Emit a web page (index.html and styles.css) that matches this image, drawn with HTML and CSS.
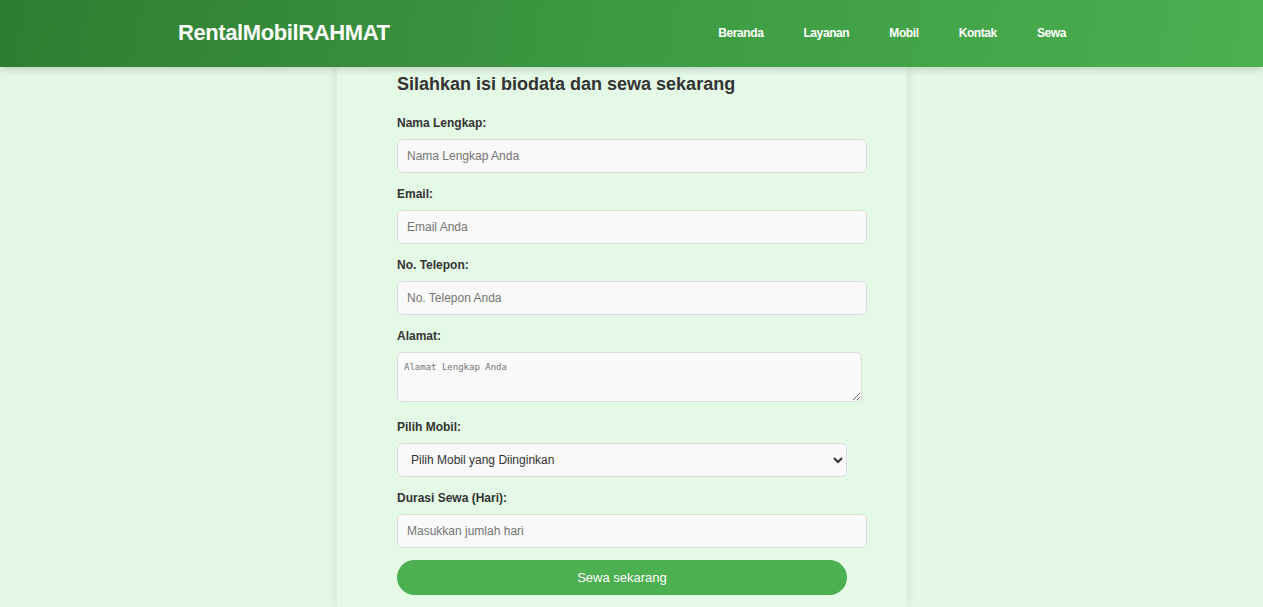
FILE: index.html
```html
<!DOCTYPE html>
<html lang="id">
<head>
<meta charset="utf-8">
<title>RentalMobilRAHMAT - Sewa</title>
<link rel="stylesheet" href="styles.css">
</head>
<body>
<header class="site-header">
  <div class="header-inner">
    <div class="logo">RentalMobilRAHMAT</div>
    <nav class="nav">
      <a href="#" class="nav-link">Beranda</a>
      <a href="#" class="nav-link">Layanan</a>
      <a href="#" class="nav-link">Mobil</a>
      <a href="#" class="nav-link">Kontak</a>
      <a href="#" class="nav-link">Sewa</a>
    </nav>
  </div>
</header>
<main class="main">
  <section class="card">
    <h2 class="card-title">Silahkan isi biodata dan sewa sekarang</h2>
    <form class="form">
      <label class="label" for="nama">Nama Lengkap:</label>
      <input class="field" id="nama" type="text" placeholder="Nama Lengkap Anda">
      <label class="label" for="email">Email:</label>
      <input class="field" id="email" type="email" placeholder="Email Anda">
      <label class="label" for="telp">No. Telepon:</label>
      <input class="field" id="telp" type="tel" placeholder="No. Telepon Anda">
      <label class="label" for="alamat">Alamat:</label>
      <textarea class="area" id="alamat" placeholder="Alamat Lengkap Anda"></textarea>
      <label class="label" for="mobil">Pilih Mobil:</label>
      <select class="select" id="mobil">
        <option>Pilih Mobil yang Diinginkan</option>
        <option>Toyota Avanza</option>
        <option>Honda Jazz</option>
      </select>
      <label class="label" for="durasi">Durasi Sewa (Hari):</label>
      <input class="field field-last" id="durasi" type="number" placeholder="Masukkan jumlah hari">
      <button class="submit" type="button">Sewa sekarang</button>
    </form>
  </section>
</main>
</body>
</html>
```
FILE: styles.css
```css
* { box-sizing: border-box; }

body {
  margin: 0;
  font-family: "Liberation Sans", Arial, sans-serif;
  background: #e3f9e5;
  color: #333;
}

.site-header {
  position: relative;
  z-index: 2;
  height: 67px;
  padding-right: 19px;
  background: linear-gradient(100deg, #2e7d32 0%, #3d9a42 50%, #4caf50 100%);
  box-shadow: 0 2px 8px rgba(0, 0, 0, 0.18);
}

.header-inner {
  width: 888px;
  height: 100%;
  margin: 0 auto;
  display: flex;
  align-items: center;
  justify-content: space-between;
}

.logo {
  color: #fff;
  font-size: 22px;
  font-weight: bold;
  letter-spacing: -0.4px;
  padding-bottom: 2px;
}

.nav {
  display: flex;
  gap: 40px;
  padding-bottom: 2px;
}

.nav-link {
  color: #fff;
  text-decoration: none;
  font-size: 12px;
  font-weight: bold;
  letter-spacing: -0.4px;
}

.main {
  padding-right: 19px;
}

.card {
  width: 570px;
  margin: 0 auto;
  padding: 7px 60px 12px;
  background: #e4f9e6;
  box-shadow: 0 0 10px rgba(0, 0, 0, 0.1);
}

.card-title {
  margin: 0 0 20px;
  font-size: 18px;
  line-height: 21px;
  font-weight: bold;
  color: #333;
}

.form {
  display: block;
}

.label {
  display: block;
  font-size: 12px;
  line-height: 14px;
  font-weight: bold;
  color: #333;
  padding-top: 1px;
  margin-bottom: 9px;
}

.field {
  display: block;
  width: calc(100% + 20px);
  height: 34px;
  margin: 0 0 13px;
  padding: 0 9px;
  font-family: "Liberation Sans", Arial, sans-serif;
  font-size: 12px;
  color: #333;
  background: #f9f9f9;
  border: 1px solid #ddd;
  border-radius: 5px;
}

.field-last {
  margin-bottom: 12px;
}

.field::placeholder {
  color: #757575;
}

.area {
  display: block;
  width: 465px;
  height: 50px;
  margin: 0 0 17px;
  padding: 9px 6px;
  font-family: "DejaVu Sans Mono", monospace;
  font-size: 9px;
  background: #f9f9f9;
  border: 1px solid #ddd;
  border-radius: 5px;
}

.area::placeholder {
  color: #757575;
}

.select {
  display: block;
  width: 100%;
  height: 34px;
  margin: 0 0 13px;
  padding: 0 9px 0 9px;
  font-family: "Liberation Sans", Arial, sans-serif;
  font-size: 12px;
  color: #333;
  background-color: #f9f9f9;
  border: 1px solid #ddd;
  border-radius: 5px;
}

.submit {
  display: block;
  width: 100%;
  height: 35px;
  border: none;
  border-radius: 18px;
  background: #4caf50;
  color: #fff;
  font-family: "Liberation Sans", Arial, sans-serif;
  font-size: 13px;
  cursor: pointer;
}
```
